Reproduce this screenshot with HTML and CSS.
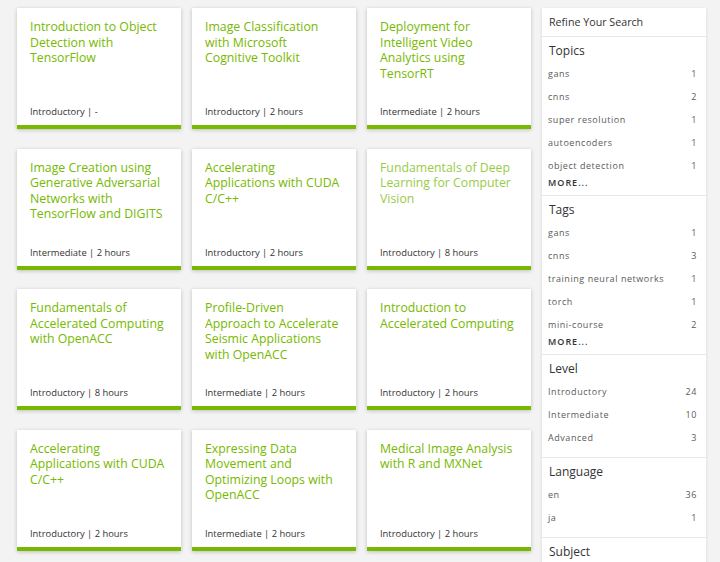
FILE: index.html
```html
<!DOCTYPE html>
<html>
<head>
<meta charset="utf-8">
<link rel="stylesheet" href="styles.css">
</head>
<body>
<div class="page">
  <div class="grid">
    <div class="card"><div class="title">Introduction to Object Detection with TensorFlow</div><div class="meta">Introductory | -</div></div>
    <div class="card"><div class="title">Image Classification with Microsoft Cognitive Toolkit</div><div class="meta">Introductory | 2 hours</div></div>
    <div class="card"><div class="title">Deployment for Intelligent Video Analytics using TensorRT</div><div class="meta">Intermediate | 2 hours</div></div>
    <div class="card"><div class="title">Image Creation using Generative Adversarial Networks with TensorFlow and DIGITS</div><div class="meta">Intermediate | 2 hours</div></div>
    <div class="card"><div class="title">Accelerating Applications with CUDA C/C++</div><div class="meta">Introductory | 2 hours</div></div>
    <div class="card"><div class="title light">Fundamentals of Deep Learning for Computer Vision</div><div class="meta">Introductory | 8 hours</div></div>
    <div class="card"><div class="title">Fundamentals of Accelerated Computing with OpenACC</div><div class="meta">Introductory | 8 hours</div></div>
    <div class="card"><div class="title">Profile-Driven Approach to Accelerate Seismic Applications with OpenACC</div><div class="meta">Intermediate | 2 hours</div></div>
    <div class="card"><div class="title">Introduction to Accelerated Computing</div><div class="meta">Introductory | 2 hours</div></div>
    <div class="card"><div class="title">Accelerating Applications with CUDA C/C++</div><div class="meta">Introductory | 2 hours</div></div>
    <div class="card"><div class="title">Expressing Data Movement and Optimizing Loops with OpenACC</div><div class="meta">Intermediate | 2 hours</div></div>
    <div class="card"><div class="title">Medical Image Analysis with R and MXNet</div><div class="meta">Introductory | 2 hours</div></div>
  </div>
  <aside class="sidebar">
    <div class="side-head">Refine Your Search</div>
    <div class="section">
      <div class="sec-title">Topics</div>
      <div class="item"><span>gans</span><span>1</span></div>
      <div class="item"><span>cnns</span><span>2</span></div>
      <div class="item"><span>super resolution</span><span>1</span></div>
      <div class="item"><span>autoencoders</span><span>1</span></div>
      <div class="item"><span>object detection</span><span>1</span></div>
      <div class="more">MORE...</div>
    </div>
    <div class="section">
      <div class="sec-title">Tags</div>
      <div class="item"><span>gans</span><span>1</span></div>
      <div class="item"><span>cnns</span><span>3</span></div>
      <div class="item"><span>training neural networks</span><span>1</span></div>
      <div class="item"><span>torch</span><span>1</span></div>
      <div class="item"><span>mini-course</span><span>2</span></div>
      <div class="more">MORE...</div>
    </div>
    <div class="section plain">
      <div class="sec-title">Level</div>
      <div class="item"><span>Introductory</span><span>24</span></div>
      <div class="item"><span>Intermediate</span><span>10</span></div>
      <div class="item"><span>Advanced</span><span>3</span></div>
    </div>
    <div class="section plain">
      <div class="sec-title">Language</div>
      <div class="item"><span>en</span><span>36</span></div>
      <div class="item"><span>ja</span><span>1</span></div>
    </div>
    <div class="section">
      <div class="sec-title">Subject</div>
    </div>
  </aside>
</div>
</body>
</html>
```

FILE: styles.css
```css
html, body {
  margin: 0;
  padding: 0;
  background: #f3f3f3;
  font-family: "Open Sans", "Liberation Sans", sans-serif;
  height: 562px;
  overflow: hidden;
}
.page {
  display: flex;
  align-items: flex-start;
  padding: 8px 0 0 17px;
}
.grid {
  display: grid;
  grid-template-columns: 164px 164px 164px;
  grid-auto-rows: 121px;
  column-gap: 11px;
  row-gap: 19.5px;
}
.card {
  box-sizing: border-box;
  height: 121px;
  background: #fff;
  border-bottom: 4px solid #76b900;
  box-shadow: 0 1px 4px rgba(0, 0, 0, 0.22);
  display: flex;
  flex-direction: column;
  justify-content: space-between;
  padding: 11px 14.5px 6px 13px;
}
.title {
  color: #76b900;
  font-size: 12.3px;
  line-height: 15.5px;
}
.title.light {
  color: #98cc48;
}
.meta {
  color: #333;
  font-size: 9.4px;
  line-height: 14px;
}
.sidebar {
  width: 164px;
  margin-left: 11px;
  background: #fff;
  box-shadow: 0 1px 3px rgba(0, 0, 0, 0.12);
  color: #333;
}
.side-head {
  height: 28px;
  line-height: 28px;
  font-size: 10.7px;
  padding-left: 7px;
  border-bottom: 1px solid #e6e6e6;
}
.section {
  padding: 6px 9px 6px 6px;
  border-bottom: 1px solid #e6e6e6;
}
.section.plain {
  padding-bottom: 8px;
}
.sec-title {
  font-size: 12px;
  line-height: 16px;
  padding-left: 1px;
  margin-bottom: 3px;
}
.item {
  display: flex;
  justify-content: space-between;
  font-size: 9px;
  letter-spacing: 0.55px;
  line-height: 23px;
  color: #5a5a5a;
}
.more {
  font-size: 9px;
  font-weight: 600;
  letter-spacing: 1px;
  line-height: 12px;
  color: #333;
}
```
